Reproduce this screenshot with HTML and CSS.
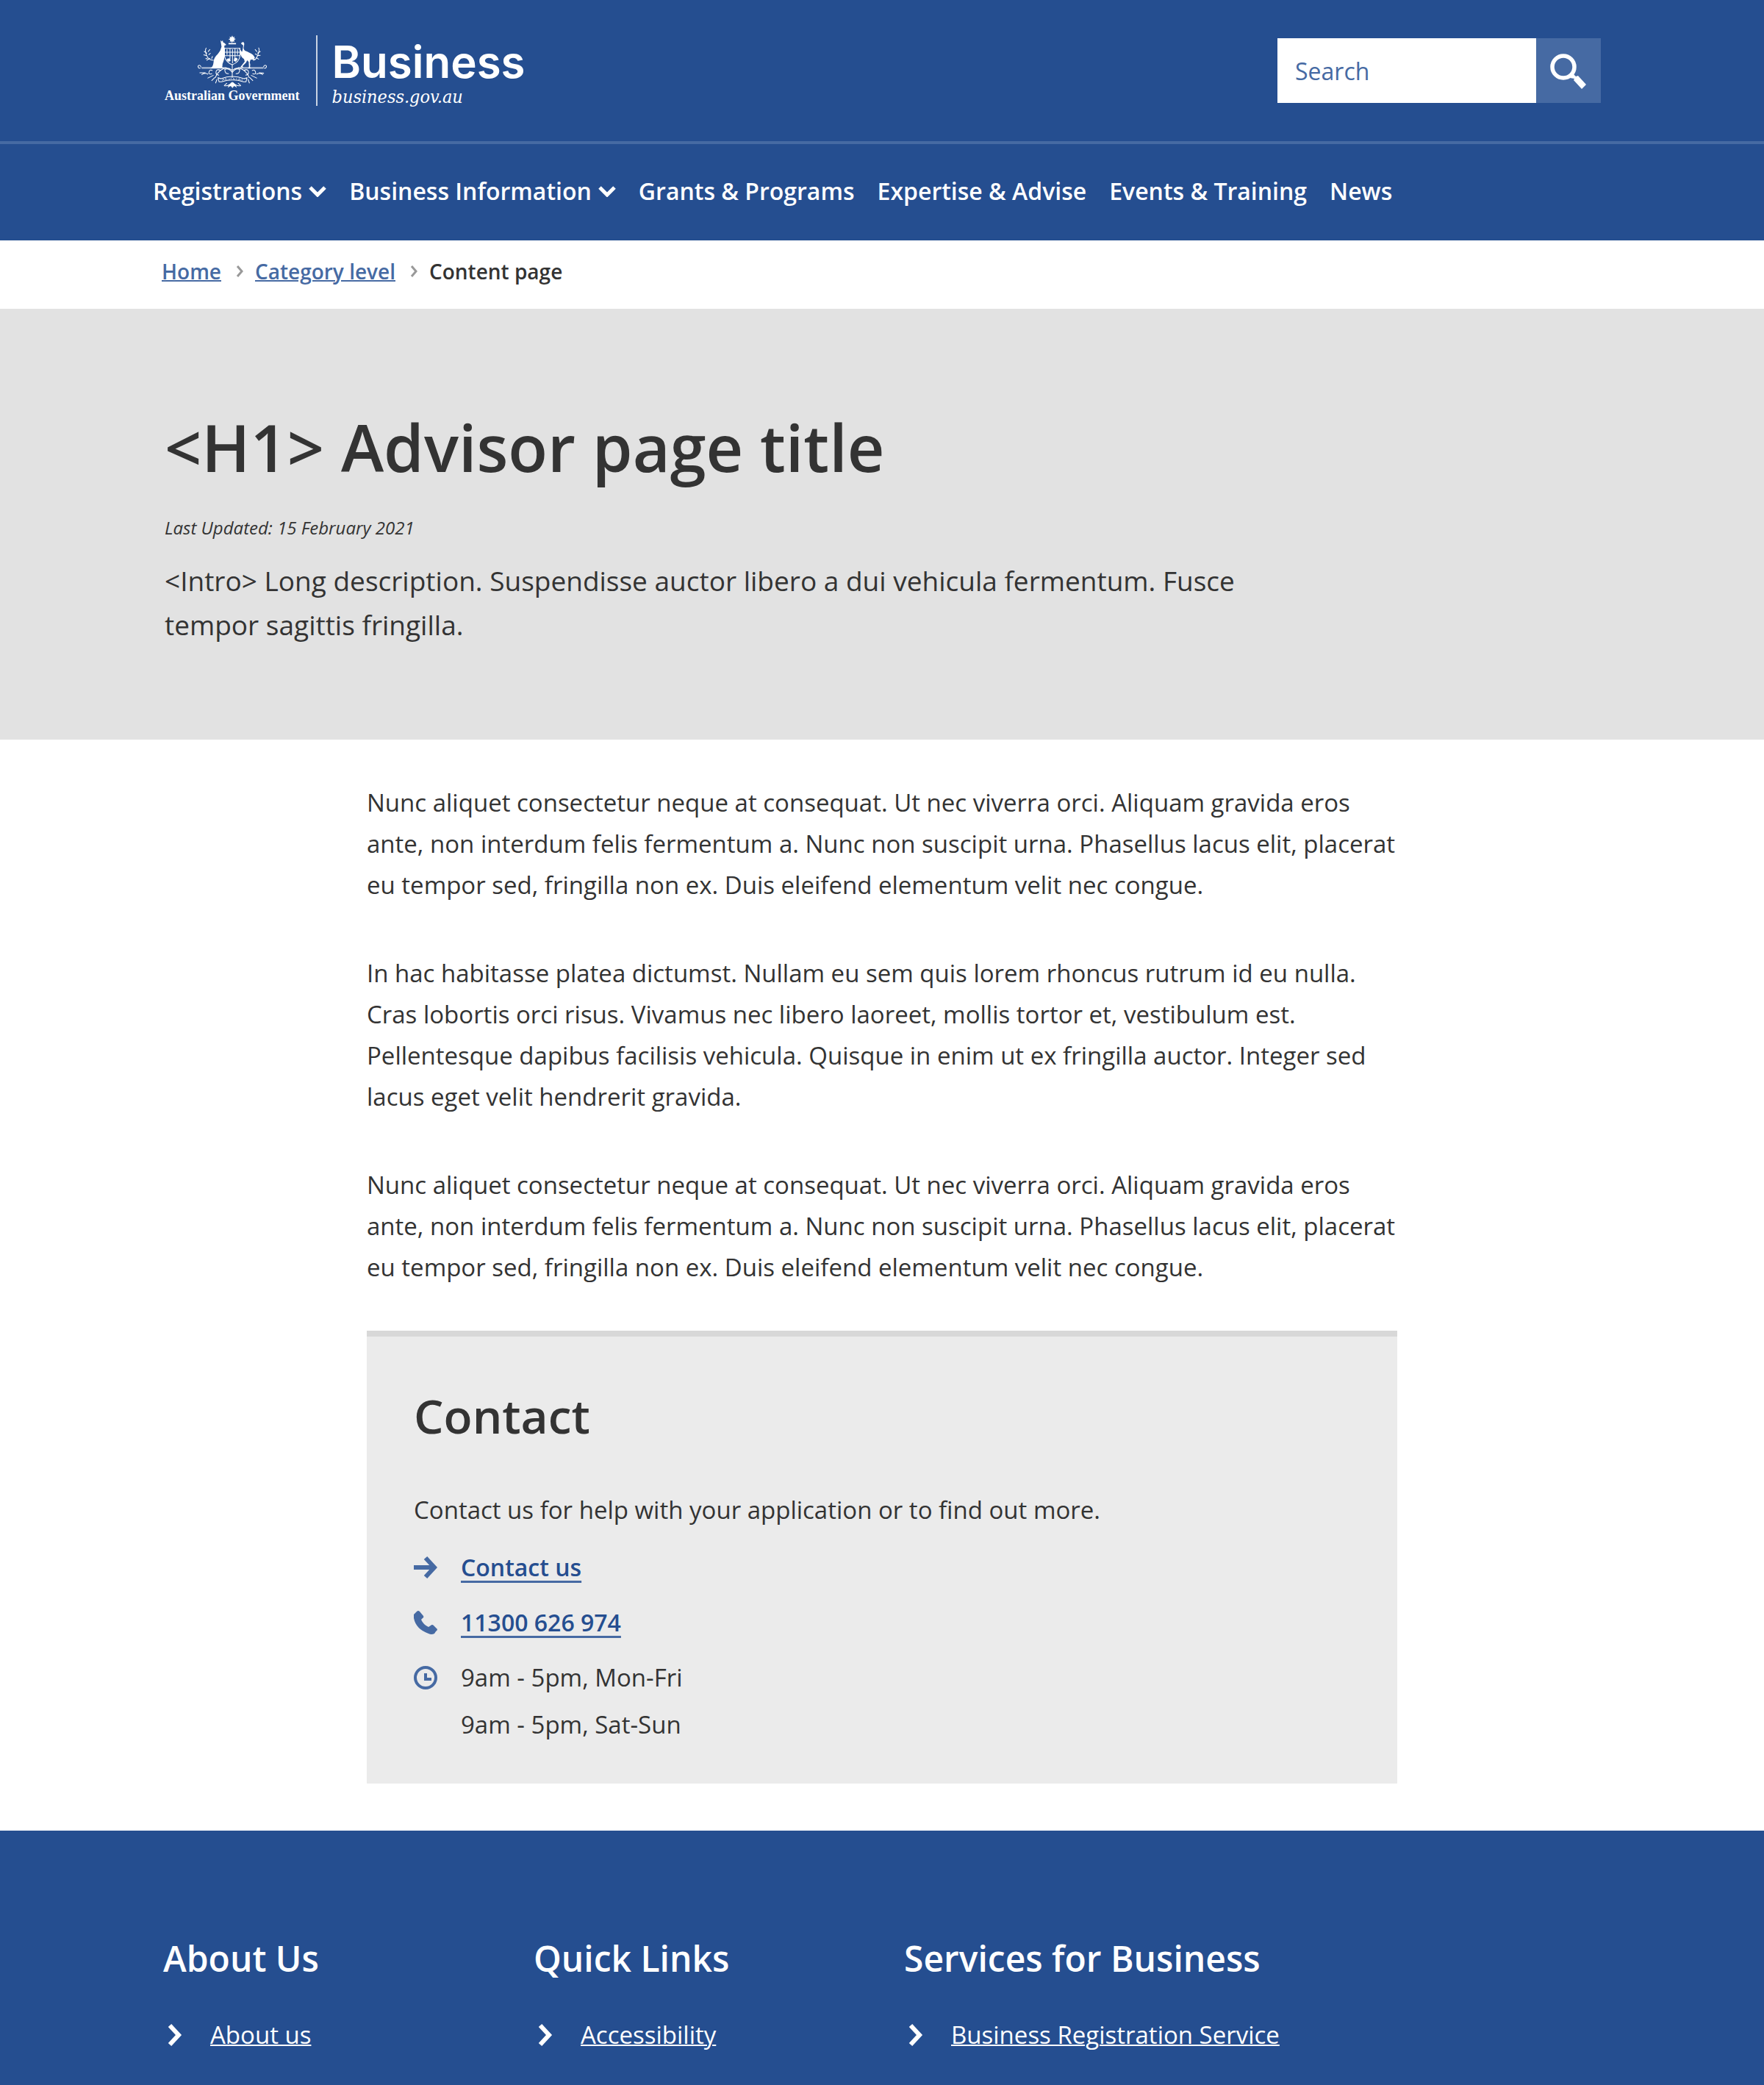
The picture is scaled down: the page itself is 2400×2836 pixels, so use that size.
FILE: index.html
```html
<!DOCTYPE html>
<html lang="en">
<head>
<meta charset="utf-8">
<meta name="viewport" content="width=device-width, initial-scale=1">
<title>Advisor page title | business.gov.au</title>
<link rel="stylesheet" href="styles.css">
</head>
<body>
<header class="header">
  <div class="container masthead">
    <a class="logo" href="#" aria-label="business.gov.au home">
      <span class="crest-block">
        <svg class="crest" viewBox="196 56 282 212" aria-hidden="true">
          <g fill="#fff">
            <path d="M337 57l3 7 7-3-3 7 7 3-7 4 2 7-7-2-3 6-3-6-6 2 2-7-7-3 7-4-3-7 7 3z"/>
            <path d="M290 76l5 5 4-5 1 8q7 3 13 10l-8 4q2 10 0 19 2 30-2 40l-5 14q0 10-2 13l10 4h-61l6-2q9-4 11-21 0-19 17-34 12-13 15-29z"/>
            <path d="M372 89q4-8 11-5 4 4 1 15-4 13 4 19 10 4 18 8 16 6 22 21l-4 2 6 7q-12-4-20-2l-3 10q4 10 1 20l5 4h-14l5-5-1-20-6-7-5 10-14 14 4 5h-13l4-6 14-18-3-10q-13-8-16-26-2-10-4-20l8 13q2 4 5 3 2-10 3-17 2-10-2-10z"/>
            <path d="M322 87h30v5h-30zM316 150l10-2 5 10-8 4-8-6zM345 148l9-2 5 6-8 10-8-4zM330 250l8-6 9 6 6 13-9-4-6 8-7-8-9 4z"/>
            <path d="M214 183h100v7h-100zM360 183h102v7h-102z" opacity=".6"/>
          </g>
          <g fill="none" stroke="#fff" stroke-width="3">
            <path d="M306 108h62v32q-4 24-31 34-25-10-31-34zM306 124h62M306 138h62M328 108v45M348 108v45M316 112v22M338 112v56M358 112v22"/>
            <path d="M212 184q-3-10-10-7-5 5 2 11h6M462 184q3-10 10-7 5 5-2 11h-6"/>
            <path d="M262 156q-20 0-28-20t-1-30M236 128l-12-8M234 138l-12-4M240 146l-10 4M240 122l8-10M242 134l8-6M248 148l-14 8M254 150l4-10"/>
            <path d="M420 156q12 0 20-22t2-28M438 128l12-8M436 138l14-2M432 146l12 6M436 122l-8-10M436 134l-8-4"/>
            <path d="M337 174v52M337 196q-20-16-40-4t-28 34M337 196q20-16 40-4t28 34M337 205q-14-20-30-12 0 18 16 17M337 205q14-20 30-12 0 18-16 17"/>
            <path d="M290 196q-16-6-18 6t12 14M258 198q-10-8-14 4t12 8M240 212q-14-8-26 2M262 216l-24 12M268 224l-14 14M276 232l-6 16M230 206l-24 0M384 196q16-6 18 6t-12 14M416 198q10-8 14 4t-12 8M434 212q14-8 26 2M412 216l24 12M406 224l14 14M400 232l6 16M444 206l20 2"/>
            <path d="M284 242l-4-16 12 4q45-18 92 0l12-4-4 16-10 0q-44-14-88 0zM304 258q18 4 32-14M372 258q-18 4-34-14M316 248l-10 8M360 248l10 8M320 264l8-10M354 264l-8-10"/>
            <path d="M297 238l4-8 4 6M310 235v-7l6 6M322 232l6 0M332 232v-6M342 226v6h6M354 228v6M362 236l3-7 5 8M376 231v7" stroke-width="2"/>
          </g>
        </svg>
        <span class="crest-name">Australian Government</span>
      </span>
      <span class="wordmark">
        <span class="wordmark-name">Business</span>
        <span class="wordmark-url">business.gov.au</span>
      </span>
    </a>
    <form class="search" role="search">
      <input class="search-input" type="search" placeholder="Search" aria-label="Search">
      <button class="search-button" type="button" aria-label="Submit search">
        <svg width="52" height="52" viewBox="0 0 52 52" aria-hidden="true">
          <circle cx="19" cy="21" r="15" fill="none" stroke="#fff" stroke-width="5.5"/>
          <path d="M28 36l5-5 3 3 3-1 11 12-6 6-11-12 1-2z" fill="#fff"/>
        </svg>
      </button>
    </form>
  </div>
  <nav class="nav" aria-label="Main">
    <ul class="container nav-list">
      <li><a class="nav-link" href="#">Registrations <svg class="chevron" viewBox="0 0 24 16" aria-hidden="true"><path d="M2 3l10 10L22 3"/></svg></a></li>
      <li><a class="nav-link" href="#">Business Information <svg class="chevron" viewBox="0 0 24 16" aria-hidden="true"><path d="M2 3l10 10L22 3"/></svg></a></li>
      <li><a class="nav-link" href="#">Grants &amp; Programs</a></li>
      <li><a class="nav-link" href="#">Expertise &amp; Advise</a></li>
      <li><a class="nav-link" href="#">Events &amp; Training</a></li>
      <li><a class="nav-link" href="#">News</a></li>
    </ul>
  </nav>
</header>
<nav class="breadcrumbs" aria-label="Breadcrumb">
  <ol class="container breadcrumb-list">
    <li><a class="breadcrumb-link" href="#">Home</a></li>
    <li class="breadcrumb-item"><svg class="separator" viewBox="0 0 10 16" aria-hidden="true"><path d="M2 1l6 7-6 7"/></svg><a class="breadcrumb-link" href="#">Category level</a></li>
    <li class="breadcrumb-item" aria-current="page"><svg class="separator" viewBox="0 0 10 16" aria-hidden="true"><path d="M2 1l6 7-6 7"/></svg>Content page</li>
  </ol>
</nav>
<main>
  <section class="hero">
    <div class="container">
      <h1 class="hero-title">&lt;H1&gt; Advisor page title</h1>
      <p class="hero-updated">Last Updated: 15 February 2021</p>
      <p class="hero-intro">&lt;Intro&gt; Long description. Suspendisse auctor libero a dui vehicula fermentum. Fusce tempor sagittis fringilla.</p>
    </div>
  </section>
  <div class="content">
    <div class="prose">
      <p>Nunc aliquet consectetur neque at consequat. Ut nec viverra orci. Aliquam gravida eros ante, non interdum felis fermentum a. Nunc non suscipit urna. Phasellus lacus elit, placerat eu tempor sed, fringilla non ex. Duis eleifend elementum velit nec congue.</p>
      <p>In hac habitasse platea dictumst. Nullam eu sem quis lorem rhoncus rutrum id eu nulla. Cras lobortis orci risus. Vivamus nec libero laoreet, mollis tortor et, vestibulum est. Pellentesque dapibus facilisis vehicula. Quisque in enim ut ex fringilla auctor. Integer sed lacus eget velit hendrerit gravida.</p>
      <p>Nunc aliquet consectetur neque at consequat. Ut nec viverra orci. Aliquam gravida eros ante, non interdum felis fermentum a. Nunc non suscipit urna. Phasellus lacus elit, placerat eu tempor sed, fringilla non ex. Duis eleifend elementum velit nec congue.</p>
    </div>
    <section class="contact">
      <h2 class="contact-title">Contact</h2>
      <p>Contact us for help with your application or to find out more.</p>
      <ul class="contact-list">
        <li class="contact-item">
          <svg class="contact-icon" viewBox="0 0 32 32" aria-hidden="true"><path d="M0 16h28M16 3l12 13-12 13" fill="none" stroke="#466aa3" stroke-width="6"/></svg>
          <a class="contact-link" href="#">Contact us</a>
        </li>
        <li class="contact-item">
          <svg class="contact-icon" viewBox="0 0 32 32" aria-hidden="true"><path d="M0 5l4-4q2-2 4 0l5 6q1 2-1 3l-2 2q3 7 10 10l3-2q2-2 4 0l5 5q0 2-2 3l-2 3q-4 2-8 0Q3 25 0 10z" fill="#466aa3"/></svg>
          <a class="contact-link" href="#">11300 626 974</a>
        </li>
        <li class="contact-item">
          <svg class="contact-icon" viewBox="0 0 32 32" aria-hidden="true"><circle cx="16" cy="16" r="14" fill="none" stroke="#466aa3" stroke-width="4"/><path d="M14 10h4v6h6v4H14z" fill="#466aa3"/></svg>
          <span>9am - 5pm, Mon-Fri<br>9am - 5pm, Sat-Sun</span>
        </li>
      </ul>
    </section>
  </div>
</main>
<footer class="footer">
  <div class="container footer-columns">
    <section>
      <h2 class="footer-title">About Us</h2>
      <a class="footer-link" href="#"><svg class="footer-arrow" viewBox="0 0 20 32" aria-hidden="true"><path d="M3 3l12 13L3 29"/></svg><span>About us</span></a>
    </section>
    <section>
      <h2 class="footer-title">Quick Links</h2>
      <a class="footer-link" href="#"><svg class="footer-arrow" viewBox="0 0 20 32" aria-hidden="true"><path d="M3 3l12 13L3 29"/></svg><span>Accessibility</span></a>
    </section>
    <section>
      <h2 class="footer-title">Services for Business</h2>
      <a class="footer-link" href="#"><svg class="footer-arrow" viewBox="0 0 20 32" aria-hidden="true"><path d="M3 3l12 13L3 29"/></svg><span>Business Registration Service</span></a>
    </section>
  </div>
</footer>
</body>
</html>
```
FILE: styles.css
```css
* {
  box-sizing: border-box;
}

body {
  display: flex;
  flex-direction: column;
  min-height: 100vh;
  margin: 0;
  background: #fff;
  color: #333;
  font-family: "Open Sans", sans-serif;
  font-size: 33px;
  line-height: 56px;
}

h1,
h2,
p,
ul,
ol {
  margin: 0;
  padding: 0;
}

ul,
ol {
  list-style: none;
}

.container {
  width: 100%;
  max-width: 2000px;
  margin: 0 auto;
  padding: 0 24px;
}

.header {
  background: #254e90;
  color: #fff;
}

.masthead {
  display: flex;
  justify-content: space-between;
  align-items: center;
  padding-top: 48px;
  padding-bottom: 48px;
  padding-right: 22px;
}

.logo {
  display: flex;
  color: #fff;
  text-decoration: none;
}

.crest-block {
  display: flex;
  flex-direction: column;
  align-items: center;
  padding-right: 22px;
  border-right: 2px solid #c8d3e3;
}

.crest {
  width: 96px;
  height: 72px;
}

.crest-name {
  font: bold 18px/20px "Liberation Serif", serif;
}

.wordmark {
  display: flex;
  flex-direction: column;
  padding-left: 20px;
}

.wordmark-name {
  font: 600 60px/72px Inter, sans-serif;
}

.wordmark-url {
  font: italic 25px/24px "DejaVu Serif Condensed", "DejaVu Serif", serif;
}

.search {
  display: flex;
}

.search-input {
  width: 352px;
  height: 88px;
  padding: 0 24px;
  border: 0;
  border-radius: 0;
  background: #fff;
  color: #466aa3;
  font: inherit;
  font-size: 32px;
  appearance: none;
}

.search-input::placeholder {
  color: #466aa3;
  opacity: 1;
}

.search-button {
  display: flex;
  align-items: center;
  justify-content: center;
  width: 88px;
  height: 88px;
  padding: 0;
  border: 0;
  background: #466aa3;
}

.nav {
  border-top: 4px solid #466aa3;
}

.nav-list {
  display: flex;
  gap: 31px;
  padding: 36px 8px 39px;
}

.nav-link {
  display: flex;
  align-items: center;
  gap: 9px;
  color: #fff;
  font-size: 32px;
  font-weight: 600;
  text-decoration: none;
}

.chevron {
  width: 24px;
  height: 16px;
  fill: none;
  stroke: #fff;
  stroke-width: 5;
}

.breadcrumb-list {
  display: flex;
  gap: 20px;
  padding: 22px 20px 31px;
  font-size: 28px;
  font-weight: 600;
  line-height: 40px;
}

.breadcrumb-item {
  display: flex;
  align-items: center;
  gap: 16px;
}

.breadcrumb-link {
  color: #466aa3;
  text-decoration-thickness: 2px;
}

.separator {
  width: 10px;
  height: 16px;
  fill: none;
  stroke: #999;
  stroke-width: 3;
}

.hero {
  padding: 128px 0 126px;
  background: #e2e2e2;
}

.hero-title {
  font-size: 88px;
  font-weight: 600;
  line-height: 120px;
}

.hero-updated {
  padding: 32px 0 24px;
  font-size: 24px;
  font-style: italic;
  line-height: 36px;
}

.hero-intro {
  max-width: 1500px;
  font-size: 37px;
  line-height: 60px;
}

.content {
  max-width: 1402px;
  margin: 0 auto;
  padding: 58px 0 64px;
}

.prose {
  display: flex;
  flex-direction: column;
  gap: 64px;
  padding-bottom: 58px;
}

.contact {
  padding: 64px 64px 48px;
  border-top: 8px solid #d8d8d8;
  background: #ebebeb;
}

.contact-title {
  padding-bottom: 56px;
  font-size: 64px;
  font-weight: 600;
  line-height: 88px;
}

.contact-list {
  display: flex;
  flex-direction: column;
  gap: 11px;
  padding-top: 18px;
  line-height: 64px;
}

.contact-item {
  display: flex;
  gap: 32px;
}

.contact-icon {
  width: 32px;
  height: 32px;
  margin-top: 16px;
}

.contact-link {
  color: #254e90;
  font-size: 32px;
  font-weight: 600;
  text-decoration: underline;
  text-decoration-color: #466aa3;
  text-decoration-thickness: 3px;
  text-underline-offset: 6px;
}

.footer {
  flex: 1;
  padding: 138px 0 32px;
  background: #254e90;
  color: #fff;
}

.footer-columns {
  display: grid;
  grid-template-columns: repeat(4, minmax(0, 1fr));
  column-gap: 60px;
  padding: 0 22px;
}

.footer-title {
  padding-bottom: 40px;
  font-size: 48px;
  font-weight: 600;
  line-height: 72px;
  white-space: nowrap;
}

.footer-link {
  display: flex;
  align-items: center;
  gap: 38px;
  padding-left: 6px;
  color: #fff;
  text-decoration-thickness: 2px;
  white-space: nowrap;
}

.footer-arrow {
  flex: none;
  width: 20px;
  height: 32px;
  fill: none;
  stroke: #fff;
  stroke-width: 6;
}
```
